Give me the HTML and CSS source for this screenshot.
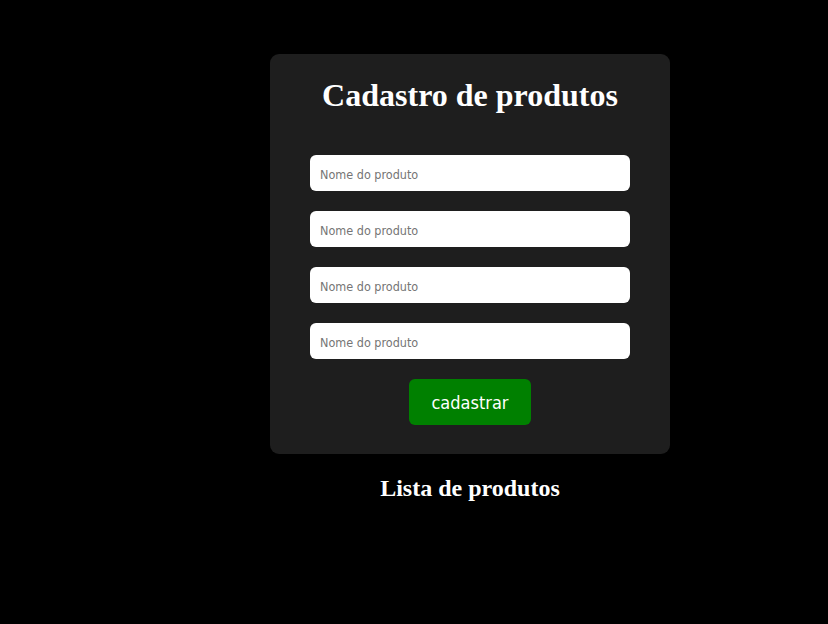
FILE: index.html
```html
<!DOCTYPE html>
<html lang="pt">
<head>
<meta charset="utf-8">
<title>Cadastro de produtos</title>
<link rel="stylesheet" href="styles.css">
</head>
<body>
<main class="page">
  <section class="card">
    <h1 class="title">Cadastro de produtos</h1>
    <form class="form">
      <input class="field" type="text" placeholder="Nome do produto">
      <input class="field" type="text" placeholder="Nome do produto">
      <input class="field" type="text" placeholder="Nome do produto">
      <input class="field" type="text" placeholder="Nome do produto">
      <button class="btn" type="button">cadastrar</button>
    </form>
  </section>
  <h2 class="subtitle">Lista de produtos</h2>
</main>
</body>
</html>
```
FILE: styles.css
```css
html, body {
  margin: 0;
  background: #000;
}
body {
  padding: 54px 0 0 270px;
  font-family: "Liberation Serif", serif;
  color: #fff;
}
.page {
  width: 400px;
  display: flex;
  flex-direction: column;
}
.card {
  box-sizing: border-box;
  width: 400px;
  height: 400px;
  background: #1e1e1e;
  border-radius: 9px;
  padding: 23px 40px 0;
  display: flex;
  flex-direction: column;
  align-items: center;
}
.title {
  margin: 0;
  font-size: 32px;
  line-height: 37px;
  font-weight: bold;
  text-align: center;
}
.form {
  margin-top: 41px;
  width: 320px;
  display: flex;
  flex-direction: column;
  align-items: center;
  gap: 20px;
}
.field {
  box-sizing: border-box;
  width: 320px;
  height: 36px;
  border: none;
  border-radius: 6px;
  background: #fff;
  padding: 2px 10px 0;
  font-family: "DejaVu Sans Condensed", "DejaVu Sans", sans-serif;
  font-stretch: condensed;
  font-size: 12.5px;
  outline: none;
}
.field::placeholder {
  color: #757575;
}
.btn {
  box-sizing: border-box;
  width: 122px;
  height: 46px;
  border: none;
  border-radius: 6px;
  background: #008000;
  color: #fff;
  font-family: "DejaVu Sans Condensed", "DejaVu Sans", sans-serif;
  font-stretch: condensed;
  font-size: 18px;
  padding: 0;
}
.subtitle {
  margin: 20px 0 0;
  font-size: 24px;
  line-height: 28px;
  font-weight: bold;
  text-align: center;
}
```
